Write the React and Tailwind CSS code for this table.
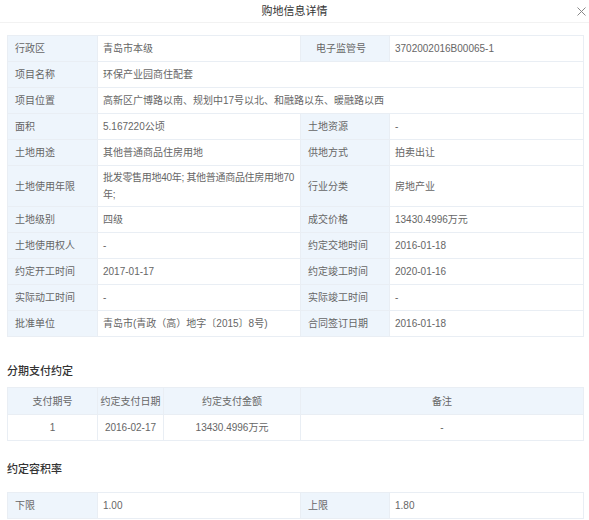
import React from 'react';

const info = [
    [['行政区', '青岛市本级'], ['电子监管号', '3702002016B00065-1']],
    [['项目名称', '环保产业园商住配套']],
    [['项目位置', '高新区广博路以南、规划中17号以北、和融路以东、暖融路以西']],
    [['面积', '5.167220公顷'], ['土地资源', '-']],
    [['土地用途', '其他普通商品住房用地'], ['供地方式', '拍卖出让']],
    [['土地使用年限', <span className="whitespace-nowrap tracking-[-0.3px]">批发零售用地40年; 其他普通商品住房用地70<br />年;</span>], ['行业分类', '房地产业']],
    [['土地级别', '四级'], ['成交价格', '13430.4996万元']],
    [['土地使用权人', '-'], ['约定交地时间', '2016-01-18']],
    [['约定开工时间', '2017-01-17'], ['约定竣工时间', '2020-01-16']],
    [['实际动工时间', '-'], ['实际竣工时间', '-']],
    [['批准单位', '青岛市(青政（高）地字〔2015〕8号)'], ['合同签订日期', '2016-01-18']],
];

const label = 'bg-[#eef5fc] border border-[#e9eef4] text-left font-normal';
const value = 'border border-[#e9eef4] pl-[5px] pr-[1px] text-left';

const InfoTable = ({ rows }) => (
    <table className="w-[576px] table-fixed border-collapse">
        <colgroup>
            <col className="w-[90px]" />
            <col className="w-[203px]" />
            <col className="w-[89px]" />
            <col className="w-[194px]" />
        </colgroup>
        <tbody>
            {rows.map((row, i) => (
                <tr key={i} className="h-[26px]">
                    <td className={label + ' pl-[7px]'}>{row[0][0]}</td>
                    <td className={value + ' leading-[17px] py-[3px]'} colSpan={row.length === 1 ? 3 : 1}>{row[0][1]}</td>
                    {row[1] && <td className={label + (row[1][0] === '电子监管号' ? ' pl-[15px]' : ' pl-[7px]')}>{row[1][0]}</td>}
                    {row[1] && <td className={value}>{row[1][1]}</td>}
                </tr>
            ))}
        </tbody>
    </table>
);

export default function App() {
    return (
        <div className="w-[589px] h-[520px] overflow-hidden bg-white text-[10px] text-[#666] font-['Liberation_Sans','Noto_Sans_CJK_SC',sans-serif]">
            {/* Title bar */}
            <div className="h-[23px] border-b border-[#f2f2f2] flex items-center justify-center relative">
                <span className="text-[11px] text-[#333]">购地信息详情</span>
                <button className="absolute right-[3px] top-[6px] w-[10px] h-[10px] flex items-center justify-center">
                    <svg width="9" height="9" viewBox="0 0 9 9">
                        <path d="M0.5 0.5L8.5 8.5M8.5 0.5L0.5 8.5" stroke="#888" strokeWidth="1" />
                    </svg>
                </button>
            </div>

            <div className="px-[7px] pt-[12px]">
                <InfoTable rows={info} />

                <h3 className="mt-[24px] h-[20px] flex items-center text-[11px] font-medium text-[#333]">分期支付约定</h3>
                <table className="mt-[6px] w-[576px] table-fixed border-collapse text-center">
                    <colgroup>
                        <col className="w-[90px]" />
                        <col className="w-[66px]" />
                        <col className="w-[137px]" />
                        <col className="w-[283px]" />
                    </colgroup>
                    <thead>
                        <tr className="h-[27px] bg-[#eef5fc]">
                            {['支付期号', '约定支付日期', '约定支付金额', '备注'].map((h) => (
                                <th key={h} className="border border-[#e9eef4] font-normal">{h}</th>
                            ))}
                        </tr>
                    </thead>
                    <tbody>
                        <tr className="h-[26px]">
                            {['1', '2016-02-17', '13430.4996万元', '-'].map((c, i) => (
                                <td key={i} className="border border-[#e9eef4]">{c}</td>
                            ))}
                        </tr>
                    </tbody>
                </table>

                <h3 className="mt-[18px] h-[20px] flex items-center text-[11px] font-medium text-[#333]">约定容积率</h3>
                <div className="mt-[13px]">
                    <InfoTable rows={[[['下限', '1.00'], ['上限', '1.80']]]} />
                </div>
            </div>
        </div>
    );
}
